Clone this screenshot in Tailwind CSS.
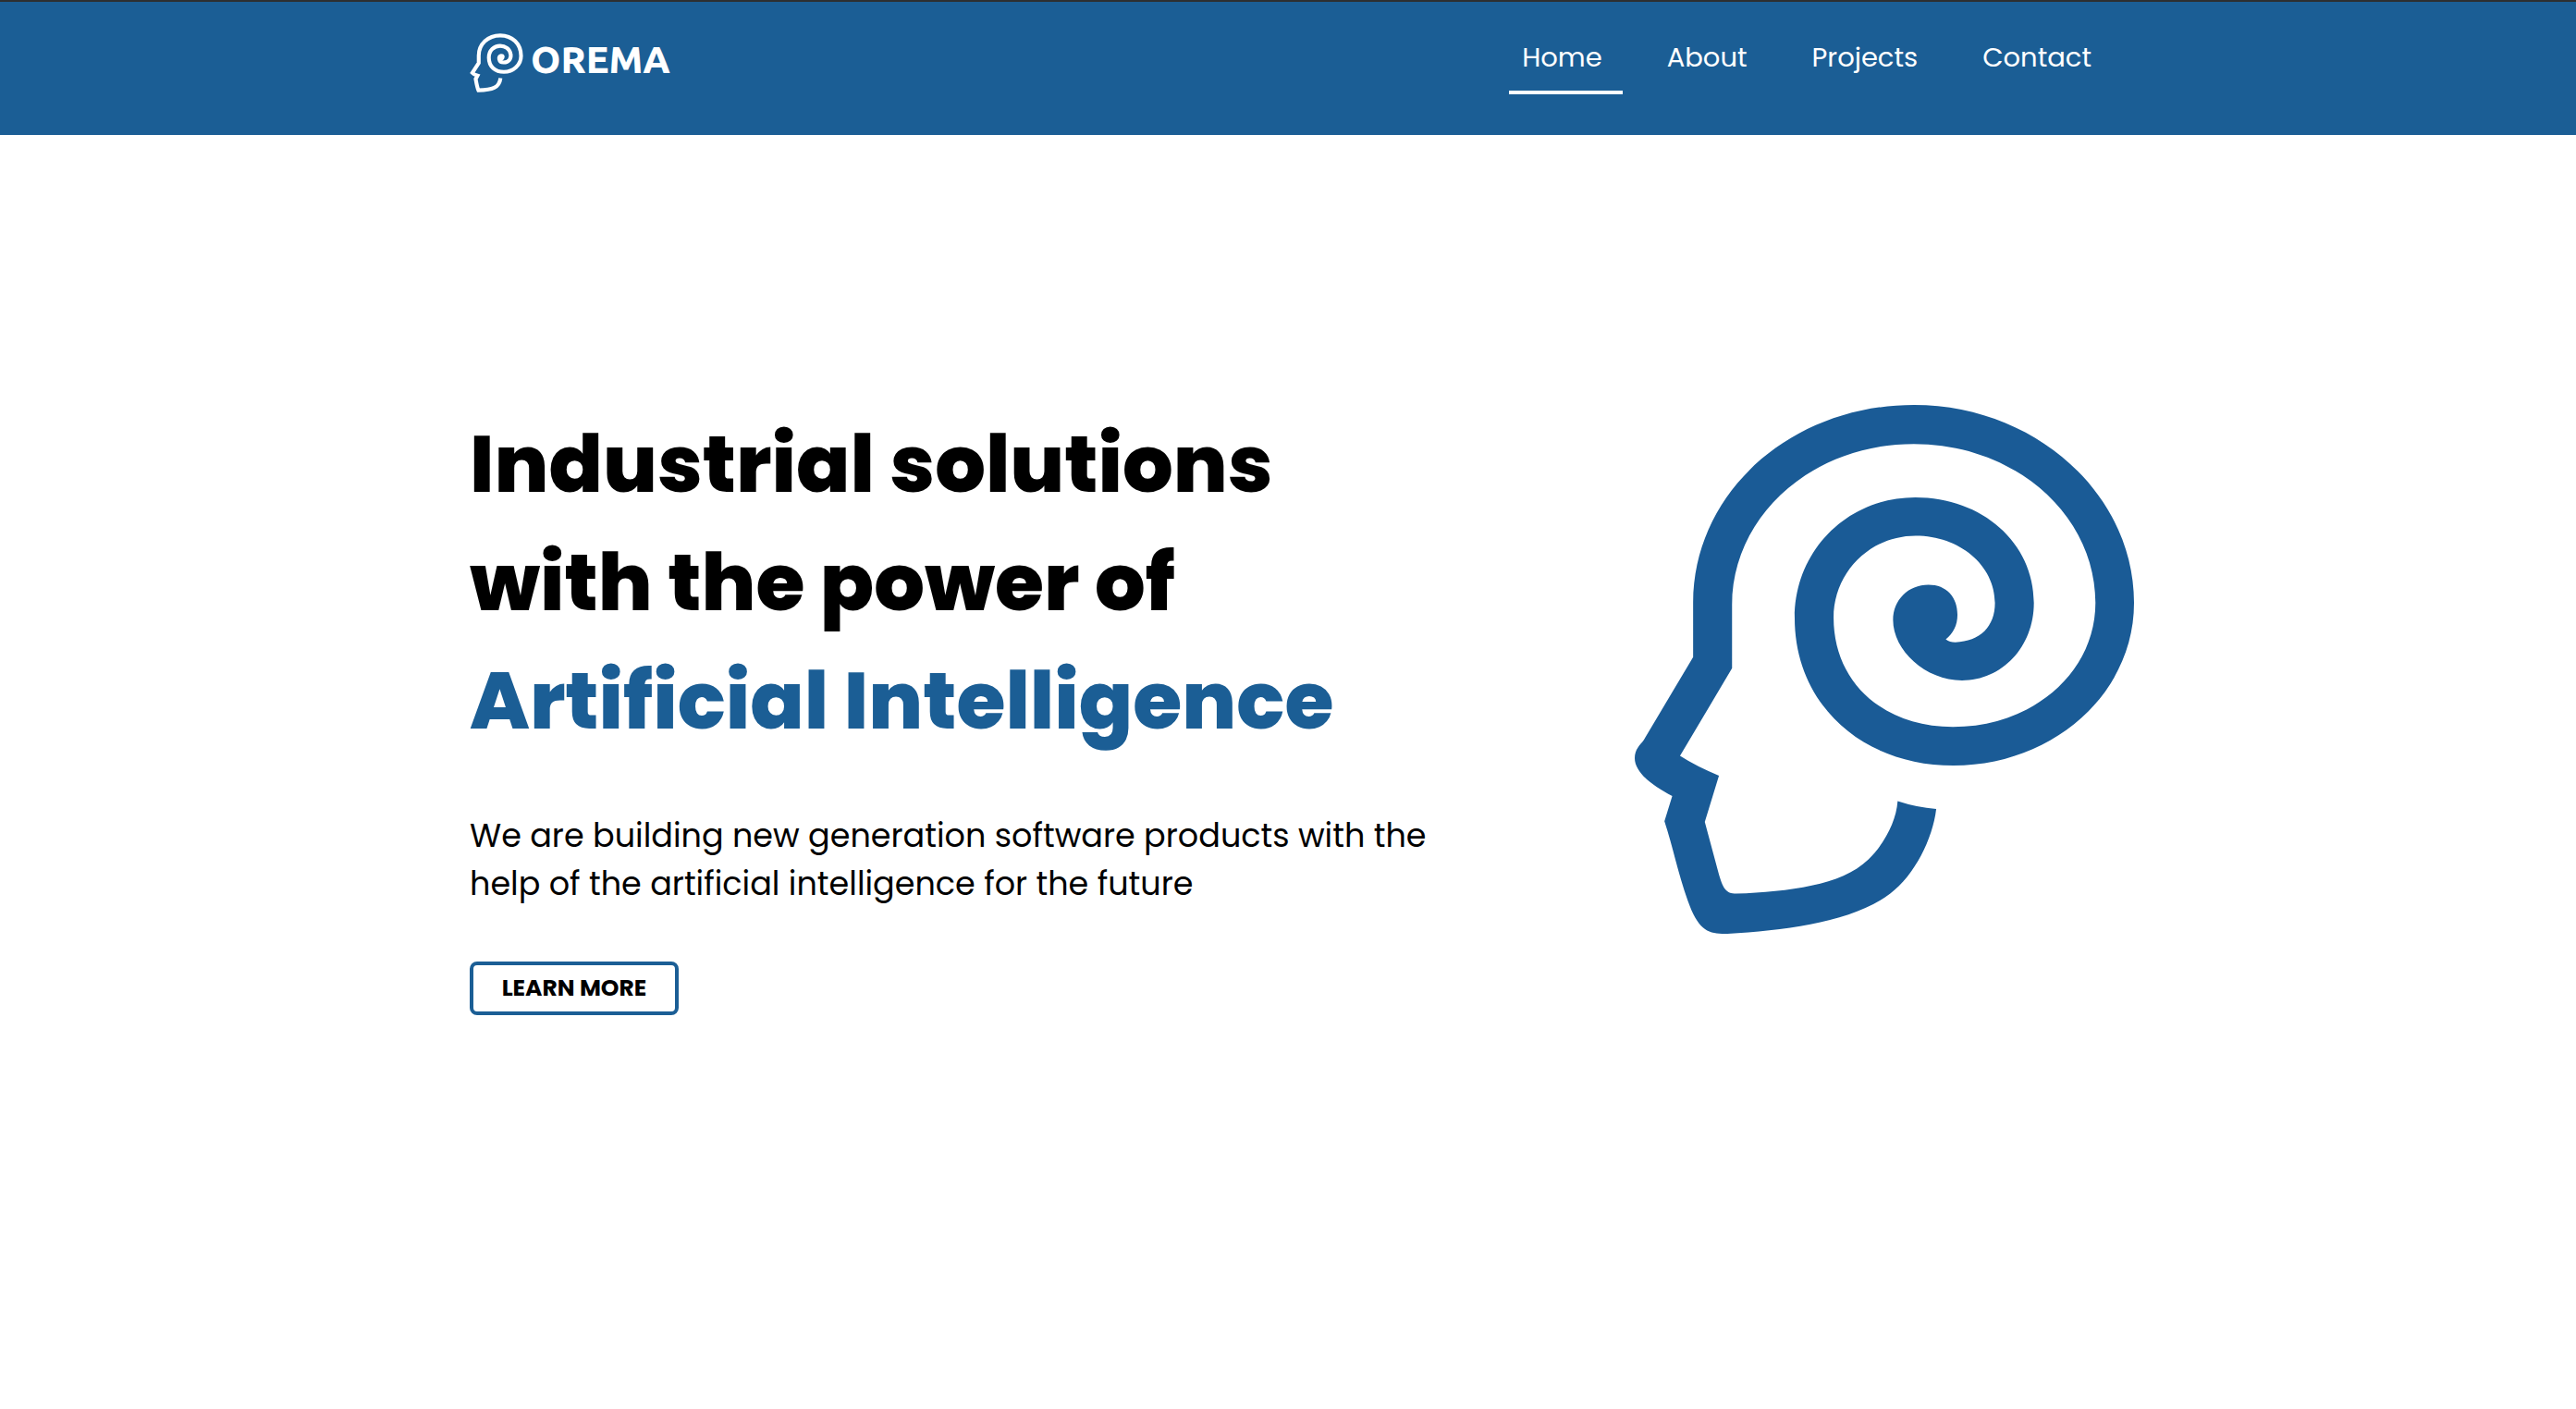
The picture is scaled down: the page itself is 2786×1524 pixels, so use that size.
<!DOCTYPE html>
<html lang="en">
<head>
<meta charset="utf-8">
<meta name="viewport" content="width=device-width, initial-scale=1">
<title>Orema</title>
<script src="https://cdn.jsdelivr.net/npm/@tailwindcss/browser@4"></script>
</head>
<body class="min-h-screen bg-white font-['Poppins','Inter',sans-serif] text-black">
<header class="h-[146px] border-t-2 border-[#2d2f31] bg-[#1b5e95] text-white">
  <div class="mx-auto flex max-w-[1802px] items-start justify-between pr-[10px] pl-4">
    <a href="#" class="mt-[34px] flex items-start gap-2" aria-label="Orema">
      <svg class="h-16 w-[58px]" viewBox="53 107 174 193" fill="none" stroke="#fff" stroke-width="12.500" aria-hidden="true">
        <path d="M155 191C162 187 162 180 155 180C145 181 146 202 163 202C181 202 189 188 186 175C183 158 168 148 152 148C132 148 115 163 115 186C115 216 136 233 164 233C195 233 220 210 220 181C220 142 192 114 152 114C112 114 82 142 82 180V204L61 236Q65 241 78 245L72 256C75 272 77 284 81 293C126 292 149 285 153 253"/>
      </svg>
      <span class="font-['Ubuntu','Noto_Sans',sans-serif] text-[41px] leading-[56px] font-extrabold">OREMA</span>
    </a>
    <nav class="mt-8 flex gap-[34px] text-[29px] leading-[56px]">
      <a href="#" class="border-b-4 border-white pr-[22px] pb-2 pl-[14px]">Home</a>
      <a href="#about" class="pr-[22px] pl-[14px]">About</a>
      <a href="#projects" class="pr-[22px] pl-[14px]">Projects</a>
      <a href="#contact" class="pr-[22px] pl-[14px]">Contact</a>
    </nav>
  </div>
</header>
<main class="mx-auto flex max-w-[1802px] items-start justify-between pt-[292px] pl-4">
  <section>
    <h1 class="text-[86px] leading-[128px] font-extrabold whitespace-nowrap">Industrial solutions<br>with the power of<br><span class="text-[#1b5e95]">Artificial Intelligence</span></h1>
    <p class="mt-14 text-[35px] leading-[52px] whitespace-nowrap">We are building new generation software products with the<br>help of the artificial intelligence for the future</p>
    <button type="button" class="mt-[58px] h-[58px] w-[226px] rounded-lg border-4 border-[#1b5e95] text-[25px] leading-[50px] font-bold">LEARN MORE</button>
  </section>
  <svg class="-mr-[14px] h-[572px] w-[540px] shrink-0" viewBox="73 69 1411 1424" preserveAspectRatio="none" fill="#1a5b96" aria-hidden="true">
    <path d="M238 748V600C240 300 520 69 862 69C1205 69 1484 310 1484 602C1484 850 1250 1040 974 1040C715 1040 525 875 525 642C525 460 675 318 866 318C1055 318 1201 440 1201 602C1201 722 1110 811 998 811C895 811 803 730 803 648C803 594 846 553 903 553C954 553 985 586 985 634C985 662 973 684 952 700C960 706 968 708 979 708C1049 706 1091 666 1091 602C1091 500 990 421 867 421C738 421 635 520 635 642C635 815 775 936 972 936C1195 936 1375 792 1375 602C1375 367 1150 174 862 174C575 174 348 367 348 608V778L201 1014Q250 1044 311 1067L271 1192L310 1330C322 1370 330 1385 360 1385C510 1378 655 1364 733 1293C780 1249 812 1190 816 1136Q870 1153 925 1157C915 1238 864 1335 795 1385C690 1461 505 1484 335 1493C284 1494 254 1488 223 1404C195 1329 181 1260 157 1190L179 1122C126 1096 73 1060 73 1020C73 996 88 985 98 972Z"/>
  </svg>
</main>
</body>
</html>
